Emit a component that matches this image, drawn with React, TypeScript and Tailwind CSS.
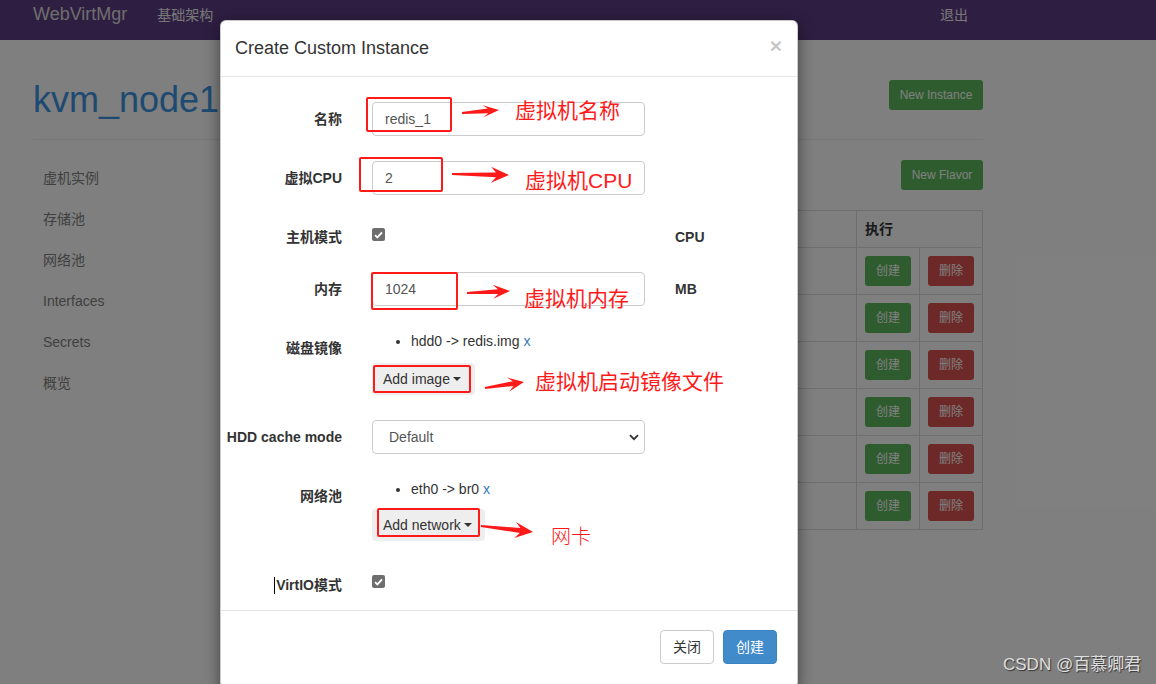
import React from 'react';

type Pt = [number, number];

// tapered screenshot-tool style arrow, computed from tail + tip
function arrowPoints(x1: number, y1: number, x2: number, y2: number, head = 14, wing = 6) {
  const dx = x2 - x1;
  const dy = y2 - y1;
  const len = Math.hypot(dx, dy);
  const ux = dx / len;
  const uy = dy / len;
  const nx = -uy;
  const ny = ux;
  const bx = x2 - ux * head;
  const by = y2 - uy * head;
  const pts: Pt[] = [
    [x1 + nx * 1, y1 + ny * 1],
    [bx + ux * 4 + nx * 2.4, by + uy * 4 + ny * 2.4],
    [bx - ux * 1 + nx * wing, by - uy * 1 + ny * wing],
    [x2, y2],
    [bx - ux * 1 - nx * wing, by - uy * 1 - ny * wing],
    [bx + ux * 4 - nx * 2.4, by + uy * 4 - ny * 2.4],
    [x1 - nx * 1, y1 - ny * 1],
  ];
  return pts.map(([x, y]) => `${x.toFixed(1)},${y.toFixed(1)}`).join(' ');
}

const arrows = [
  { x1: 462, y1: 113, x2: 499, y2: 110, head: 15, wing: 6 },
  { x1: 452, y1: 174, x2: 509, y2: 175, head: 17, wing: 8 },
  { x1: 467, y1: 293, x2: 510, y2: 291, head: 16, wing: 7 },
  { x1: 485, y1: 388, x2: 524, y2: 382, head: 15, wing: 7 },
  { x1: 481, y1: 526, x2: 533, y2: 532, head: 17, wing: 8 },
];

const sideItems = ['虚机实例', '存储池', '网络池', 'Interfaces', 'Secrets', '概览'];

function Checkbox() {
  return (
    <span className="flex h-[13px] w-[13px] items-center justify-center rounded-[2px] bg-[#6e6e6e]">
      <svg width="9" height="8" viewBox="0 0 9 8">
        <path d="M1 4.2 L3.4 6.4 L8 1.3" stroke="white" strokeWidth="1.8" fill="none" />
      </svg>
    </span>
  );
}

function Caret() {
  return (
    <span className="ml-[3px] inline-block h-0 w-0 border-x-[4px] border-t-[4px] border-x-transparent border-t-[#333333] align-middle" />
  );
}

interface RowProps {
  label: React.ReactNode;
  unit?: string;
  className?: string;
  children: React.ReactNode;
}

function Row({ label, unit, className, children }: RowProps) {
  return (
    <div className={'flex ' + (className ?? '')}>
      <div className="h-[27px] w-[136px] shrink-0 pr-[15px] pt-[7px] text-right text-[14px] font-bold leading-[20px] text-[#333333]">
        {label}
      </div>
      <div className="w-[303px] shrink-0 px-[15px]">{children}</div>
      {unit && (
        <div className="pl-[15px] pt-[7px] text-[14px] font-bold leading-[20px] text-[#333333]">{unit}</div>
      )}
    </div>
  );
}

function TextInput({ value }: { value: string }) {
  return (
    <input
      readOnly
      defaultValue={value}
      className="block h-[34px] w-full rounded-[4px] border border-[#cccccc] px-[12px] text-[14px] text-[#555555] outline-none"
    />
  );
}

function Page() {
  return (
    <div>
      <div className="flex h-[40px] items-start bg-[#5c3c84] pt-[4px] leading-[20px]">
        <span className="ml-[33px] text-[18px] text-[#dcdcdc]">WebVirtMgr</span>
        <span className="ml-[30px] pt-[1px] text-[14px] text-[#eeeeee]">基础架构</span>
        <span className="ml-auto mr-[188px] pt-[1px] text-[14px] text-[#eeeeee]">退出</span>
      </div>

      <div className="ml-[33px] w-[950px]">
        <div className="mt-[40px] flex h-[60px] items-start justify-between border-b border-[#eeeeee]">
          <h1 className="text-[36px] leading-[40px] text-[#3c94e4]">kvm_node1</h1>
          <button className="h-[30px] w-[94px] rounded-[3px] bg-[#5cb85c] text-[12px] text-white">New Instance</button>
        </div>

        <div className="flex">
          <ul className="w-[217px] shrink-0 pl-[10px] pt-[18px]">
            {sideItems.map((s) => (
              <li key={s} className="h-[41px] text-[14px] leading-[41px] text-[#7e7e7e]">
                {s}
              </li>
            ))}
          </ul>

          <div className="flex-1 pt-[20px]">
            <div className="flex justify-end">
              <button className="h-[30px] w-[82px] rounded-[3px] bg-[#5cb85c] text-[12px] text-white">New Flavor</button>
            </div>

            <div className="mt-[20px] border-l border-t border-[#dddddd]">
              <div className="flex h-[37px]">
                <div className="flex-1 border-b border-r border-[#dddddd]" />
                <div className="w-[126px] border-b border-r border-[#dddddd] pl-[8px] text-[14px] font-bold leading-[36px] text-[#333333]">
                  执行
                </div>
              </div>
              {[0, 1, 2, 3, 4, 5].map((i) => (
                <div key={i} className="flex h-[47px]">
                  <div className="flex-1 border-b border-r border-[#dddddd]" />
                  <div className="flex w-[63px] items-center border-b border-r border-[#dddddd] pl-[8px]">
                    <button className="h-[30px] w-[46px] rounded-[3px] bg-[#5cb85c] text-[12px] text-white">创建</button>
                  </div>
                  <div className="flex w-[63px] items-center border-b border-r border-[#dddddd] pl-[8px]">
                    <button className="h-[30px] w-[46px] rounded-[3px] bg-[#d9534f] text-[12px] text-white">删除</button>
                  </div>
                </div>
              ))}
            </div>
          </div>
        </div>
      </div>
    </div>
  );
}

function Modal() {
  return (
    <div className="absolute left-[220px] top-[20px] h-[668px] w-[578px] rounded-[6px] border border-black/20 bg-white shadow-[0_5px_15px_rgba(0,0,0,0.5)]">
      <div className="flex h-[56px] items-center justify-between border-b border-[#e5e5e5] pl-[14px] pr-[15px]">
        <span className="pb-[1px] text-[18px] text-[#333333]">Create Custom Instance</span>
        <span className="pb-[6px] text-[21px] font-bold leading-none text-[#c8c8c8]">×</span>
      </div>

      <div className="pb-[15px] pt-[25px]">
        <Row label="名称">
          <TextInput value="redis_1" />
        </Row>
        <Row label="虚拟CPU" className="mt-[25px]">
          <TextInput value="2" />
        </Row>
        <Row label="主机模式" unit="CPU" className="mt-[25px]">
          <div className="pt-[8px]">
            <Checkbox />
          </div>
        </Row>
        <Row label="内存" unit="MB" className="mt-[25px]">
          <TextInput value="1024" />
        </Row>
        <Row label="磁盘镜像" className="mt-[25px]">
          <ul className="list-disc pl-[39px] text-[14px] leading-[20px] text-[#333333]">
            <li>
              hdd0 -&gt; redis.img <span className="text-[#337ab7]">x</span>
            </li>
          </ul>
          <div className="mt-[12px] flex h-[32px] w-[103px] items-center rounded-[4px] bg-[#eeeeee] pl-[11px] text-[14px] text-[#333333]">
            Add image
            <Caret />
          </div>
        </Row>
        <Row label="HDD cache mode" className="mt-[25px]">
          <div className="flex h-[34px] items-center justify-between rounded-[4px] border border-[#cccccc] pl-[16px] pr-[5px] text-[14px] text-[#555555]">
            <span>Default</span>
            <svg width="10" height="7" viewBox="0 0 10 7">
              <path d="M1 1.2 L5 5.2 L9 1.2" stroke="#333333" strokeWidth="1.8" fill="none" />
            </svg>
          </div>
        </Row>
        <Row label="网络池" className="mt-[25px]">
          <ul className="list-disc pl-[39px] text-[14px] leading-[20px] text-[#333333]">
            <li>
              eth0 -&gt; br0 <span className="text-[#337ab7]">x</span>
            </li>
          </ul>
          <div className="mt-[10px] flex h-[32px] w-[113px] items-center rounded-[4px] bg-[#eeeeee] pl-[11px] text-[14px] text-[#333333]">
            Add network
            <Caret />
          </div>
        </Row>
        <Row
          label={
            <span className="inline-flex h-[20px] items-center">
              <span className="mr-[1px] inline-block h-[17px] w-px bg-black" />
              VirtIO模式
            </span>
          }
          className="mt-[27px]"
        >
          <div className="pt-[7px]">
            <Checkbox />
          </div>
        </Row>
      </div>

      <div className="flex justify-end gap-[9px] border-t border-[#e5e5e5] pr-[20px] pt-[19px]">
        <button className="h-[34px] w-[54px] rounded-[4px] border border-[#cccccc] bg-white text-[14px] text-[#333333]">关闭</button>
        <button className="h-[34px] w-[54px] rounded-[4px] border border-[#3a84c4] bg-[#428bca] text-[14px] text-white">创建</button>
      </div>
    </div>
  );
}

function Annotations() {
  return (
    <div className="pointer-events-none absolute inset-0">
      <div className="absolute left-[366px] top-[97px] h-[35px] w-[86px] rounded-[2px] border-2 border-[#ff1a1a]" />
      <div className="absolute left-[359px] top-[157px] h-[35px] w-[84px] rounded-[2px] border-2 border-[#ff1a1a]" />
      <div className="absolute left-[371px] top-[272px] h-[38px] w-[87px] rounded-[2px] border-2 border-[#ff1a1a]" />
      <div className="absolute left-[373px] top-[365px] h-[28px] w-[98px] rounded-[2px] border-2 border-[#ff1a1a]" />
      <div className="absolute left-[377px] top-[508px] h-[29px] w-[103px] rounded-[2px] border-2 border-[#ff1a1a]" />

      <svg className="absolute inset-0" width="1156" height="684">
        {arrows.map((a, i) => (
          <polygon key={i} points={arrowPoints(a.x1, a.y1, a.x2, a.y2, a.head, a.wing)} fill="#ff1a1a" />
        ))}
      </svg>

      <span className="absolute left-[515px] top-[97px] text-[21px] leading-[28px] text-[#ff1a1a]">虚拟机名称</span>
      <span className="absolute left-[525px] top-[167px] text-[21px] leading-[28px] text-[#ff1a1a]">虚拟机CPU</span>
      <span className="absolute left-[524px] top-[285px] text-[21px] leading-[28px] text-[#ff1a1a]">虚拟机内存</span>
      <span className="absolute left-[535px] top-[368px] text-[21px] leading-[28px] text-[#ff1a1a]">虚拟机启动镜像文件</span>
      <span className="absolute left-[551px] top-[523px] text-[20px] font-light leading-[28px] text-[#ff1a1a]">网卡</span>
    </div>
  );
}

export default function App() {
  return (
    <div className="relative h-[684px] w-[1156px] overflow-hidden bg-white font-['Liberation_Sans','Noto_Sans_CJK_SC',sans-serif]">
      <Page />
      <div className="absolute inset-0 bg-black/50" />
      <Modal />
      <Annotations />
      <span className="absolute left-[1003px] top-[654px] text-[17px] leading-[22px] text-[#dedede] [text-shadow:1px_1px_1px_rgba(0,0,0,0.6)]">
        CSDN @百慕卿君
      </span>
    </div>
  );
}
